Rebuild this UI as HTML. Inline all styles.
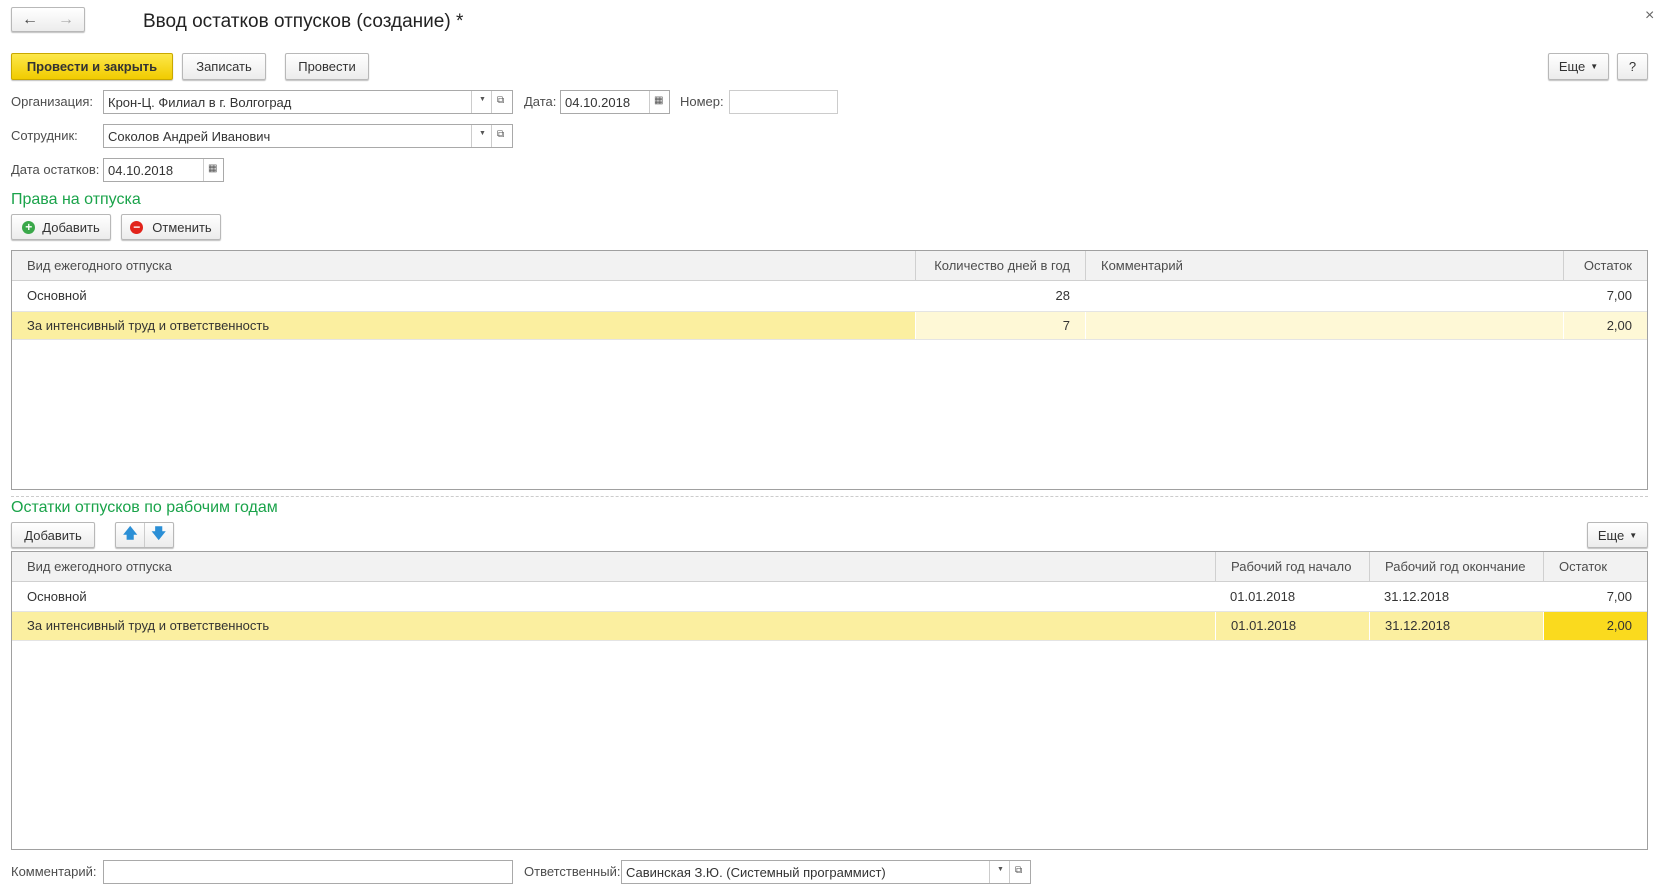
<!DOCTYPE html>
<html><head><meta charset="utf-8"><style>
*{box-sizing:border-box;margin:0;padding:0}
body{width:1665px;height:895px;background:#fff;font-family:"Liberation Sans",Arial,sans-serif;font-size:13px;color:#333;position:relative;overflow:hidden}
.a{position:absolute}
.btn{position:absolute;border:1px solid #b8b8b8;border-radius:2px;background:linear-gradient(#fff,#ececec);box-shadow:0 1px 1px rgba(0,0,0,.25);text-align:center;color:#333;display:flex;align-items:center;justify-content:center}
.fld{position:absolute;border:1px solid #a9a9a9;background:#fff;height:24px;display:flex;align-items:center;padding-left:4px;color:#333}
.sep{position:absolute;top:0;bottom:0;border-left:1px solid #ccc}
.lbl{position:absolute;color:#4d4d4d;line-height:24px}
.tbl{position:absolute;border:1px solid #a0a0a0;background:#fff}
.hd{position:absolute;left:0;right:0;top:0;height:30px;background:#f2f2f2;border-bottom:1px solid #d0d0d0}
.c{position:absolute;top:0;bottom:0;line-height:29px;padding:0 15px;white-space:nowrap}
.row{position:absolute;left:0;right:0;border-bottom:1px solid #e4e4e4}
.green{color:#1aa34a;font-size:16px}
.icon{font-size:10px;color:#555}
</style></head><body>
<div class="btn" style="left:11px;top:7px;width:74px;height:25px;justify-content:space-around"><span style="font-size:16px;color:#444">&#8592;</span><span style="font-size:16px;color:#aaa">&#8594;</span></div>
<div class="a" style="left:143px;top:11px;font-size:19px;color:#222">Ввод остатков отпусков (создание) *</div>
<div class="a" style="left:1645px;top:7px;font-size:16px;color:#666">×</div>

<div class="btn" style="left:11px;top:53px;width:162px;height:27px;background:linear-gradient(#fde84a,#f1cb00);border-color:#c9a800;font-weight:bold;color:#333">Провести и закрыть</div>
<div class="btn" style="left:182px;top:53px;width:84px;height:27px">Записать</div>
<div class="btn" style="left:285px;top:53px;width:84px;height:27px">Провести</div>
<div class="btn" style="left:1548px;top:53px;width:61px;height:27px">Еще <span style="font-size:8px;margin-left:5px">▼</span></div>
<div class="btn" style="left:1617px;top:53px;width:31px;height:27px">?</div>

<div class="lbl" style="left:11px;top:90px">Организация:</div>
<div class="fld" style="left:103px;top:90px;width:410px">Крон-Ц. Филиал в г. Волгоград<div class="sep" style="left:367px"></div><div class="a icon" style="left:375px;top:5px;font-size:7px">▼</div><div class="sep" style="left:387px"></div><div class="a icon" style="left:393px;top:4px">⧉</div></div>
<div class="lbl" style="left:524px;top:90px">Дата:</div>
<div class="fld" style="left:560px;top:90px;width:110px">04.10.2018<div class="sep" style="left:88px"></div><div class="a icon" style="left:93px;top:4px">▦</div></div>
<div class="lbl" style="left:680px;top:90px">Номер:</div>
<div class="fld" style="left:729px;top:90px;width:109px;border-color:#ccc"></div>

<div class="lbl" style="left:11px;top:124px">Сотрудник:</div>
<div class="fld" style="left:103px;top:124px;width:410px">Соколов Андрей Иванович<div class="sep" style="left:367px"></div><div class="a icon" style="left:375px;top:5px;font-size:7px">▼</div><div class="sep" style="left:387px"></div><div class="a icon" style="left:393px;top:4px">⧉</div></div>

<div class="lbl" style="left:11px;top:158px">Дата остатков:</div>
<div class="fld" style="left:103px;top:158px;width:121px">04.10.2018<div class="sep" style="left:99px"></div><div class="a icon" style="left:104px;top:4px">▦</div></div>

<div class="a green" style="left:11px;top:191px">Права на отпуска</div>
<div class="btn" style="left:11px;top:214px;width:100px;height:26px"><span style="display:inline-block;width:13px;height:13px;border-radius:50%;background:#3aa84a;color:#fff;font-size:12px;line-height:13px;font-weight:bold;margin-right:7px">+</span>Добавить</div>
<div class="btn" style="left:121px;top:214px;width:100px;height:26px"><span style="display:inline-block;width:13px;height:13px;border-radius:50%;background:#e2231a;color:#fff;font-size:12px;line-height:12px;font-weight:bold;margin-right:9px">−</span>Отменить</div>

<div class="tbl" style="left:11px;top:250px;width:1637px;height:240px">
<div class="hd"><div class="c" style="left:0;width:903px;color:#4d4d4d">Вид ежегодного отпуска</div><div class="c" style="left:903px;width:170px;border-left:1px solid #d0d0d0;text-align:right;color:#4d4d4d">Количество дней в год</div><div class="c" style="left:1073px;width:478px;border-left:1px solid #d0d0d0;color:#4d4d4d">Комментарий</div><div class="c" style="left:1551px;right:0;border-left:1px solid #d0d0d0;color:#4d4d4d;text-align:right">Остаток</div></div>
<div class="row" style="top:30px;height:31px"><div class="c" style="left:0">Основной</div><div class="c" style="left:903px;width:170px;text-align:right">28</div><div class="c" style="left:1551px;right:0;text-align:right">7,00</div></div>
<div class="row" style="top:61px;height:28px;background:#fef8d6"><div class="c" style="left:0;width:903px;background:#fbefa0;line-height:27px">За интенсивный труд и ответственность</div><div class="c" style="left:903px;width:170px;text-align:right;line-height:27px;border-left:1px solid #fff">7</div><div class="c" style="left:1073px;width:478px;border-left:1px solid #fff"></div><div class="c" style="left:1551px;right:0;text-align:right;line-height:27px;border-left:1px solid #fff">2,00</div></div>
</div>

<div class="a" style="left:11px;top:496px;width:1637px;border-top:1px dashed #ccc"></div>
<div class="a green" style="left:11px;top:499px">Остатки отпусков по рабочим годам</div>
<div class="btn" style="left:11px;top:522px;width:84px;height:26px">Добавить</div>
<div class="btn" style="left:115px;top:522px;width:59px;height:26px;justify-content:space-around"><span style="color:#2b8fd6;font-size:14px;font-weight:bold">🡅</span><span style="color:#2b8fd6;font-size:14px;font-weight:bold">🡇</span></div>
<div class="a" style="left:144px;top:523px;height:24px;border-left:1px solid #ccc"></div>
<div class="btn" style="left:1587px;top:522px;width:61px;height:26px">Еще <span style="font-size:8px;margin-left:5px">▼</span></div>

<div class="tbl" style="left:11px;top:551px;width:1637px;height:299px">
<div class="hd"><div class="c" style="left:0;width:1203px;color:#4d4d4d">Вид ежегодного отпуска</div><div class="c" style="left:1203px;width:154px;border-left:1px solid #d0d0d0;color:#4d4d4d">Рабочий год начало</div><div class="c" style="left:1357px;width:174px;border-left:1px solid #d0d0d0;color:#4d4d4d">Рабочий год окончание</div><div class="c" style="left:1531px;right:0;border-left:1px solid #d0d0d0;color:#4d4d4d">Остаток</div></div>
<div class="row" style="top:30px;height:30px"><div class="c" style="left:0">Основной</div><div class="c" style="left:1203px">01.01.2018</div><div class="c" style="left:1357px">31.12.2018</div><div class="c" style="left:1531px;right:0;text-align:right">7,00</div></div>
<div class="row" style="top:60px;height:29px;background:#fbefa0"><div class="c" style="left:0;line-height:28px">За интенсивный труд и ответственность</div><div class="c" style="left:1203px;width:154px;line-height:28px;border-left:1px solid #fff">01.01.2018</div><div class="c" style="left:1357px;width:174px;line-height:28px;border-left:1px solid #fff">31.12.2018</div><div class="c" style="left:1531px;right:0;text-align:right;line-height:28px;background:#fada1e;border-left:1px solid #fff">2,00</div></div>
</div>

<div class="lbl" style="left:11px;top:860px">Комментарий:</div>
<div class="fld" style="left:103px;top:860px;width:410px"></div>
<div class="lbl" style="left:524px;top:860px">Ответственный:</div>
<div class="fld" style="left:621px;top:860px;width:410px">Савинская З.Ю. (Системный программист)<div class="sep" style="left:367px"></div><div class="a icon" style="left:375px;top:5px;font-size:7px">▼</div><div class="sep" style="left:387px"></div><div class="a icon" style="left:393px;top:4px">⧉</div></div>
</body></html>
